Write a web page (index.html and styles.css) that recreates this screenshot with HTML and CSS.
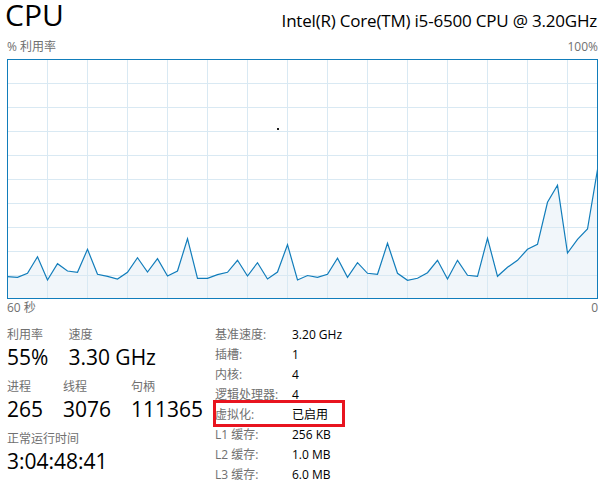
FILE: index.html
```html
<!DOCTYPE html>
<html lang="zh-CN">
<head>
<meta charset="utf-8">
<title>CPU</title>
<link rel="stylesheet" href="styles.css">
</head>
<body>
<div class="tm">
  <header class="head">
    <h1 class="title">CPU</h1>
    <div class="model">Intel(R) Core(TM) i5-6500 CPU @ 3.20GHz</div>
  </header>
  <div class="axis axis-top"><span>% 利用率</span><span>100%</span></div>
  <div class="chart">
    <svg class="graph" width="591" height="240" viewBox="0 0 591 240" xmlns="http://www.w3.org/2000/svg">
      <rect x="0" y="0" width="591" height="240" fill="#ffffff"/>
      <polygon class="area" points="0.5,217.7 10.5,218.3 20.5,214.3 30.5,197.7 40.5,221 50.5,204.7 60.5,212 70.5,213.3 80.5,190.3 90.5,215.3 100.5,217.3 110.5,220 120.5,213.3 130.5,198.7 140.5,213 150.5,199.7 160.5,217 170.5,212 180.5,179.7 190.5,219.3 200.5,219.3 210.5,215.7 220.5,213.3 230.5,201.3 240.5,217 250.5,203.7 260.5,220 270.5,213 280.5,185.7 290.5,221 300.5,216.5 310.5,218.3 320.5,215.3 330.5,199.3 340.5,218.3 350.5,203.7 360.5,214.3 370.5,215.3 380.5,184.3 390.5,214.3 400.5,221.3 410.5,219.3 420.5,213.7 430.5,201.3 440.5,220 450.5,201.3 460.5,216.3 470.5,217.3 480.5,179.3 490.5,217.3 500.5,208.3 510.5,201.3 520.5,190.3 530.5,185.3 540.5,143.3 550.5,126.3 560.5,194 570.5,180.3 580.5,170 590.5,110.5 590.5,239 0.5,239"/>
      <g class="grid">
        <line x1="40.5" y1="0" x2="40.5" y2="240"/>
        <line x1="80.5" y1="0" x2="80.5" y2="240"/>
        <line x1="120.5" y1="0" x2="120.5" y2="240"/>
        <line x1="160.5" y1="0" x2="160.5" y2="240"/>
        <line x1="200.5" y1="0" x2="200.5" y2="240"/>
        <line x1="240.5" y1="0" x2="240.5" y2="240"/>
        <line x1="280.5" y1="0" x2="280.5" y2="240"/>
        <line x1="320.5" y1="0" x2="320.5" y2="240"/>
        <line x1="360.5" y1="0" x2="360.5" y2="240"/>
        <line x1="400.5" y1="0" x2="400.5" y2="240"/>
        <line x1="440.5" y1="0" x2="440.5" y2="240"/>
        <line x1="480.5" y1="0" x2="480.5" y2="240"/>
        <line x1="520.5" y1="0" x2="520.5" y2="240"/>
        <line x1="560.5" y1="0" x2="560.5" y2="240"/>
        <line x1="0" y1="24.5" x2="591" y2="24.5"/>
        <line x1="0" y1="48.5" x2="591" y2="48.5"/>
        <line x1="0" y1="72.5" x2="591" y2="72.5"/>
        <line x1="0" y1="96.5" x2="591" y2="96.5"/>
        <line x1="0" y1="120.5" x2="591" y2="120.5"/>
        <line x1="0" y1="144.5" x2="591" y2="144.5"/>
        <line x1="0" y1="168.5" x2="591" y2="168.5"/>
        <line x1="0" y1="192.5" x2="591" y2="192.5"/>
        <line x1="0" y1="216.5" x2="591" y2="216.5"/>
      </g>
      <polyline class="line" points="0.5,217.7 10.5,218.3 20.5,214.3 30.5,197.7 40.5,221 50.5,204.7 60.5,212 70.5,213.3 80.5,190.3 90.5,215.3 100.5,217.3 110.5,220 120.5,213.3 130.5,198.7 140.5,213 150.5,199.7 160.5,217 170.5,212 180.5,179.7 190.5,219.3 200.5,219.3 210.5,215.7 220.5,213.3 230.5,201.3 240.5,217 250.5,203.7 260.5,220 270.5,213 280.5,185.7 290.5,221 300.5,216.5 310.5,218.3 320.5,215.3 330.5,199.3 340.5,218.3 350.5,203.7 360.5,214.3 370.5,215.3 380.5,184.3 390.5,214.3 400.5,221.3 410.5,219.3 420.5,213.7 430.5,201.3 440.5,220 450.5,201.3 460.5,216.3 470.5,217.3 480.5,179.3 490.5,217.3 500.5,208.3 510.5,201.3 520.5,190.3 530.5,185.3 540.5,143.3 550.5,126.3 560.5,194 570.5,180.3 580.5,170 590.5,110.5"/>
      <rect class="frame" x="0.5" y="0.5" width="590" height="239"/>
    </svg>
    <span class="cursor-dot"></span>
  </div>
  <div class="axis axis-bottom"><span>60 秒</span><span>0</span></div>

  <section class="stats">
    <div class="live">
      <div class="group">
        <div class="stat"><div class="label">利用率</div><div class="value">55%</div></div>
        <div class="stat"><div class="label">速度</div><div class="value">3.30 GHz</div></div>
      </div>
      <div class="group">
        <div class="stat"><div class="label">进程</div><div class="value">265</div></div>
        <div class="stat"><div class="label">线程</div><div class="value">3076</div></div>
        <div class="stat"><div class="label">句柄</div><div class="value">111365</div></div>
      </div>
      <div class="group">
        <div class="stat"><div class="label">正常运行时间</div><div class="value">3:04:48:41</div></div>
      </div>
    </div>
    <dl class="specs">
      <div class="spec"><dt>基准速度:</dt><dd>3.20 GHz</dd></div>
      <div class="spec"><dt>插槽:</dt><dd>1</dd></div>
      <div class="spec"><dt>内核:</dt><dd>4</dd></div>
      <div class="spec"><dt>逻辑处理器:</dt><dd>4</dd></div>
      <div class="spec spec-marked"><dt>虚拟化:</dt><dd>已启用</dd><span class="mark"></span></div>
      <div class="spec"><dt>L1 缓存:</dt><dd>256 KB</dd></div>
      <div class="spec"><dt>L2 缓存:</dt><dd>1.0 MB</dd></div>
      <div class="spec"><dt>L3 缓存:</dt><dd>6.0 MB</dd></div>
    </dl>
  </section>
</div>
</body>
</html>
```

FILE: styles.css
```css
html, body {
  margin: 0;
  padding: 0;
  background: #ffffff;
}

body {
  font-family: "Open Sans", "Noto Sans CJK SC", sans-serif;
  color: #000000;
}

.tm {
  padding: 0 9px 0 7px;
}

.head {
  display: flex;
  justify-content: space-between;
  align-items: baseline;
  height: 30px;
}

.title {
  margin: 0 0 0 -2px;
  font-size: 30px;
  font-weight: 400;
  line-height: 30px;
}

.model {
  font-size: 17px;
  letter-spacing: -0.2px;
  line-height: 30px;
  position: relative;
  top: 1px;
  margin-right: 1px;
}

.axis {
  display: flex;
  justify-content: space-between;
  font-size: 12px;
  line-height: 16px;
  color: #707070;
}

.axis-top {
  margin-top: 9px;
}

.axis-bottom {
  margin-top: 1px;
}

.chart {
  position: relative;
  margin-top: 4px;
  width: 591px;
  height: 240px;
}

.graph {
  display: block;
}

.area {
  fill: #f1f6fa;
}

.grid line {
  stroke: #d9e9f3;
  stroke-width: 1;
}

.line {
  fill: none;
  stroke: #117dbb;
  stroke-width: 1.2;
  stroke-linejoin: miter;
}

.frame {
  fill: none;
  stroke: #117dbb;
  stroke-width: 1;
}

.cursor-dot {
  position: absolute;
  left: 270px;
  top: 69px;
  width: 2px;
  height: 2px;
  background: #1a1a1a;
}

.stats {
  display: flex;
  margin-top: 11px;
}

.live {
  flex: none;
  width: 208px;
  display: flex;
  flex-direction: column;
  gap: 10px;
}

.group {
  display: flex;
  gap: 20px;
}

.stat {
  display: flex;
  flex-direction: column;
}

.label {
  font-size: 12px;
  line-height: 16px;
  color: #707070;
}

.value {
  margin-top: 2px;
  font-size: 21px;
  line-height: 24px;
}

.specs {
  margin: 1px 0 0;
  font-size: 12px;
  line-height: 14px;
  display: flex;
  flex-direction: column;
  gap: 6px;
}

.spec {
  display: flex;
  position: relative;
}

.spec dt {
  width: 77px;
  flex: none;
  color: #707070;
}

.spec dd {
  margin: 0;
}

.mark {
  position: absolute;
  left: -2px;
  top: -8px;
  width: 132px;
  height: 27px;
  box-sizing: border-box;
  border: 3px solid #e8141f;
}
```
